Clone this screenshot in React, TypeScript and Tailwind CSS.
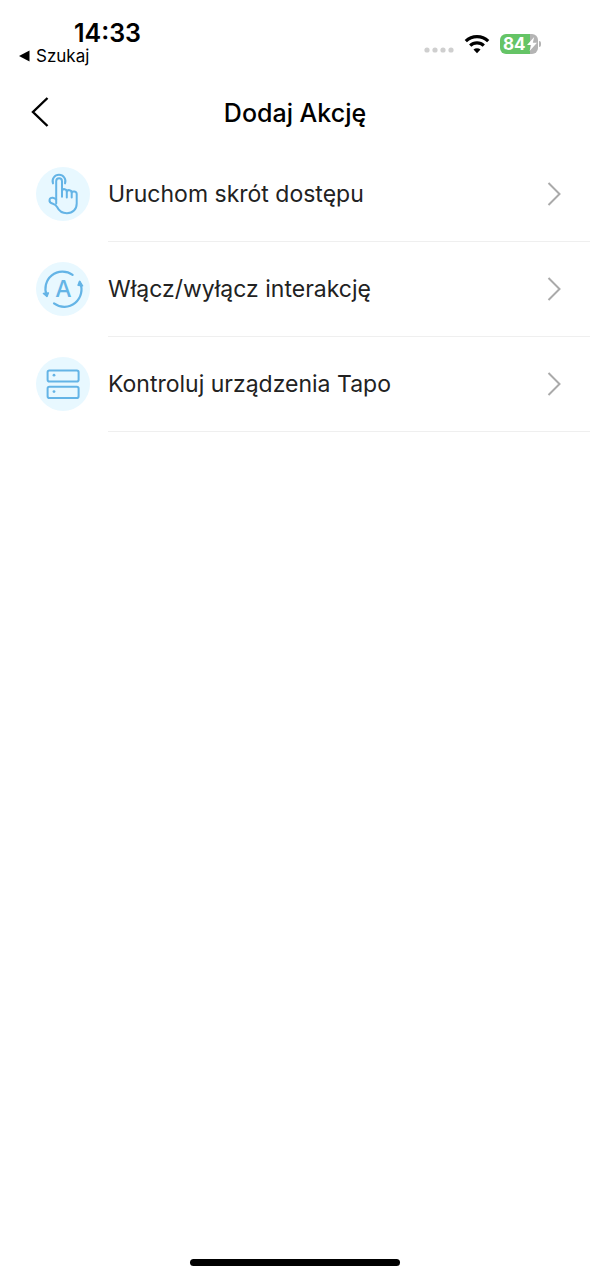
import React from 'react';

interface Action {
  label: string;
  icon: React.ReactNode;
}

const TapIcon = () => (
  <svg viewBox="0 0 54 54" className="h-full w-full" fill="none" stroke="#64b4e6" strokeWidth="2" strokeLinecap="round" strokeLinejoin="round">
    <path d="M17 16.4a6.4 6.4 0 1 1 12 0" />
    <path d="M20.2 36.4V14.2a2.9 2.9 0 0 1 5.8 0v15.6" />
    <path d="M26 23.4c.8-2 4.8-1.6 4.8 1.2v5.8" />
    <path d="M30.8 24.4c.8-2 4.9-1.6 4.9 1.2v5" />
    <path d="M35.7 25.4c.9-1.6 5-1.2 5 1.6v9.4c0 6-4 9.8-9.8 9.8-5 0-8-2.4-9.8-6.2-1-1.8-2.2-2.6-4.2-3.2-2.2-.6-3.6-2-3.4-3.8.2-1.8 1.8-2.4 3.2-2.2 1.4.2 2.6.8 3.5 1.8" />
  </svg>
);

const AutomationIcon = () => (
  <svg viewBox="0 0 54 54" className="h-full w-full" fill="none" stroke="#64b4e6" strokeWidth="2.2" strokeLinecap="round" strokeLinejoin="round">
    <path d="M10.8 33.6A17.2 17.2 0 0 1 36.6 12.8" />
    <path d="M7.4 31.4l3.6 3 1.4-3.4z" fill="#64b4e6" strokeWidth="1.4" />
    <path d="M43.8 20.2A17.2 17.2 0 0 1 18 41.4" />
    <path d="M42 23.2l1.6-4 3 4.6z" fill="#64b4e6" strokeWidth="1.4" />
    <text x="27.3" y="34.6" textAnchor="middle" fill="#64b4e6" stroke="none" fontSize="23" fontWeight="500">
      A
    </text>
  </svg>
);

const DevicesIcon = () => (
  <svg viewBox="0 0 54 54" className="h-full w-full" fill="none" stroke="#64b4e6" strokeWidth="2">
    <rect x="11.6" y="13.4" width="31" height="11.2" rx="1.8" />
    <rect x="11.6" y="29.8" width="31" height="11.2" rx="1.8" />
    <circle cx="18" cy="18.2" r="1.4" fill="#64b4e6" stroke="none" />
    <circle cx="18" cy="34.6" r="1.4" fill="#64b4e6" stroke="none" />
  </svg>
);

const actions: Action[] = [
  { label: 'Uruchom skrót dostępu', icon: <TapIcon /> },
  { label: 'Włącz/wyłącz interakcję', icon: <AutomationIcon /> },
  { label: 'Kontroluj urządzenia Tapo', icon: <DevicesIcon /> },
];

const StatusBar = () => (
  <div className="flex h-20 items-start justify-between pl-[18px] pr-[49px]">
    <div className="pt-[21px]">
      <div className="pl-14 text-[25px] leading-6 font-semibold">14:33</div>
      <a href="#szukaj" className="flex items-center gap-1.5 text-[17px] leading-[22px]">
        <svg viewBox="0 0 12 12" className="h-3 w-3" fill="black">
          <path d="M1 6l10.5-5.5v11z" />
        </svg>
        Szukaj
      </a>
    </div>

    <div className="flex items-center pt-8">
      <svg viewBox="0 0 30 24" className="mr-2.5 h-6 w-[30px]" fill="#cfcfcf">
        <circle cx="3" cy="18" r="2.6" />
        <circle cx="11" cy="18" r="2.6" />
        <circle cx="19" cy="18" r="2.6" />
        <circle cx="27" cy="18" r="2.6" />
      </svg>
      <svg viewBox="0 0 26 20" className="mr-2.5 h-5 w-[26px]" fill="none" stroke="black" strokeWidth="3.2">
        <path d="M1.8 7.2a16 16 0 0 1 22.4 0" />
        <path d="M6.2 11.7a9.7 9.7 0 0 1 13.6 0" />
        <path d="M13 19.2l-3.5-3.6a5 5 0 0 1 7 0z" fill="black" stroke="none" />
      </svg>
      <div className="flex h-5 w-[38px] items-center rounded-md bg-linear-to-r from-[#65c466] from-80% to-[#b4b4b4] to-80% pl-[3px] text-white">
        <span className="text-[17px] leading-5 font-bold">84</span>
        <svg viewBox="0 0 12 16" className="h-4 w-3" fill="white">
          <path d="M8.2 1L1 9h4.2L3.6 15 11 6.8H6.8z" />
        </svg>
      </div>
      <div className="ml-px h-1.5 w-0.5 rounded-r-full bg-[#b4b4b4]" />
    </div>
  </div>
);

const ActionRow: React.FC<{ action: Action }> = ({ action }) => (
  <li>
    <button type="button" className="flex w-full items-start gap-[18px] pl-9 text-left">
      <span className="mt-5 h-[54px] w-[54px] shrink-0 rounded-full bg-[#e8f8ff]">{action.icon}</span>
      <span className="flex h-[95px] grow items-center justify-between border-b border-[#efefef] pr-[29px]">
        <span className="text-[23px] text-[#222222]">{action.label}</span>
        <svg viewBox="0 0 14 24" className="h-6 w-3.5" fill="none" stroke="#aaaaaa" strokeWidth="2">
          <path d="M1.5 1l11 11-11 11" />
        </svg>
      </span>
    </button>
  </li>
);

const App: React.FC = () => {
  return (
    <div className="flex min-h-screen flex-col bg-white font-['Inter','Liberation_Sans',sans-serif] text-black">
      <StatusBar />

      <header className="grid h-[67px] grid-cols-[60px_1fr_60px] items-center">
        <button type="button" aria-label="Wstecz" className="flex justify-end pr-[11px] pb-1">
          <svg viewBox="0 0 18 30" className="h-[30px] w-[18px]" fill="none" stroke="black" strokeWidth="2.4">
            <path d="M16.5 1L2 15l14.5 14" />
          </svg>
        </button>
        <h1 className="text-center text-[25px] font-medium">Dodaj Akcję</h1>
      </header>

      <main className="grow">
        <ul>
          {actions.map((action) => (
            <ActionRow key={action.label} action={action} />
          ))}
        </ul>
      </main>

      <div className="flex justify-center pb-3">
        <div className="h-[7px] w-[210px] rounded-full bg-black" />
      </div>
    </div>
  );
};

export default App;
